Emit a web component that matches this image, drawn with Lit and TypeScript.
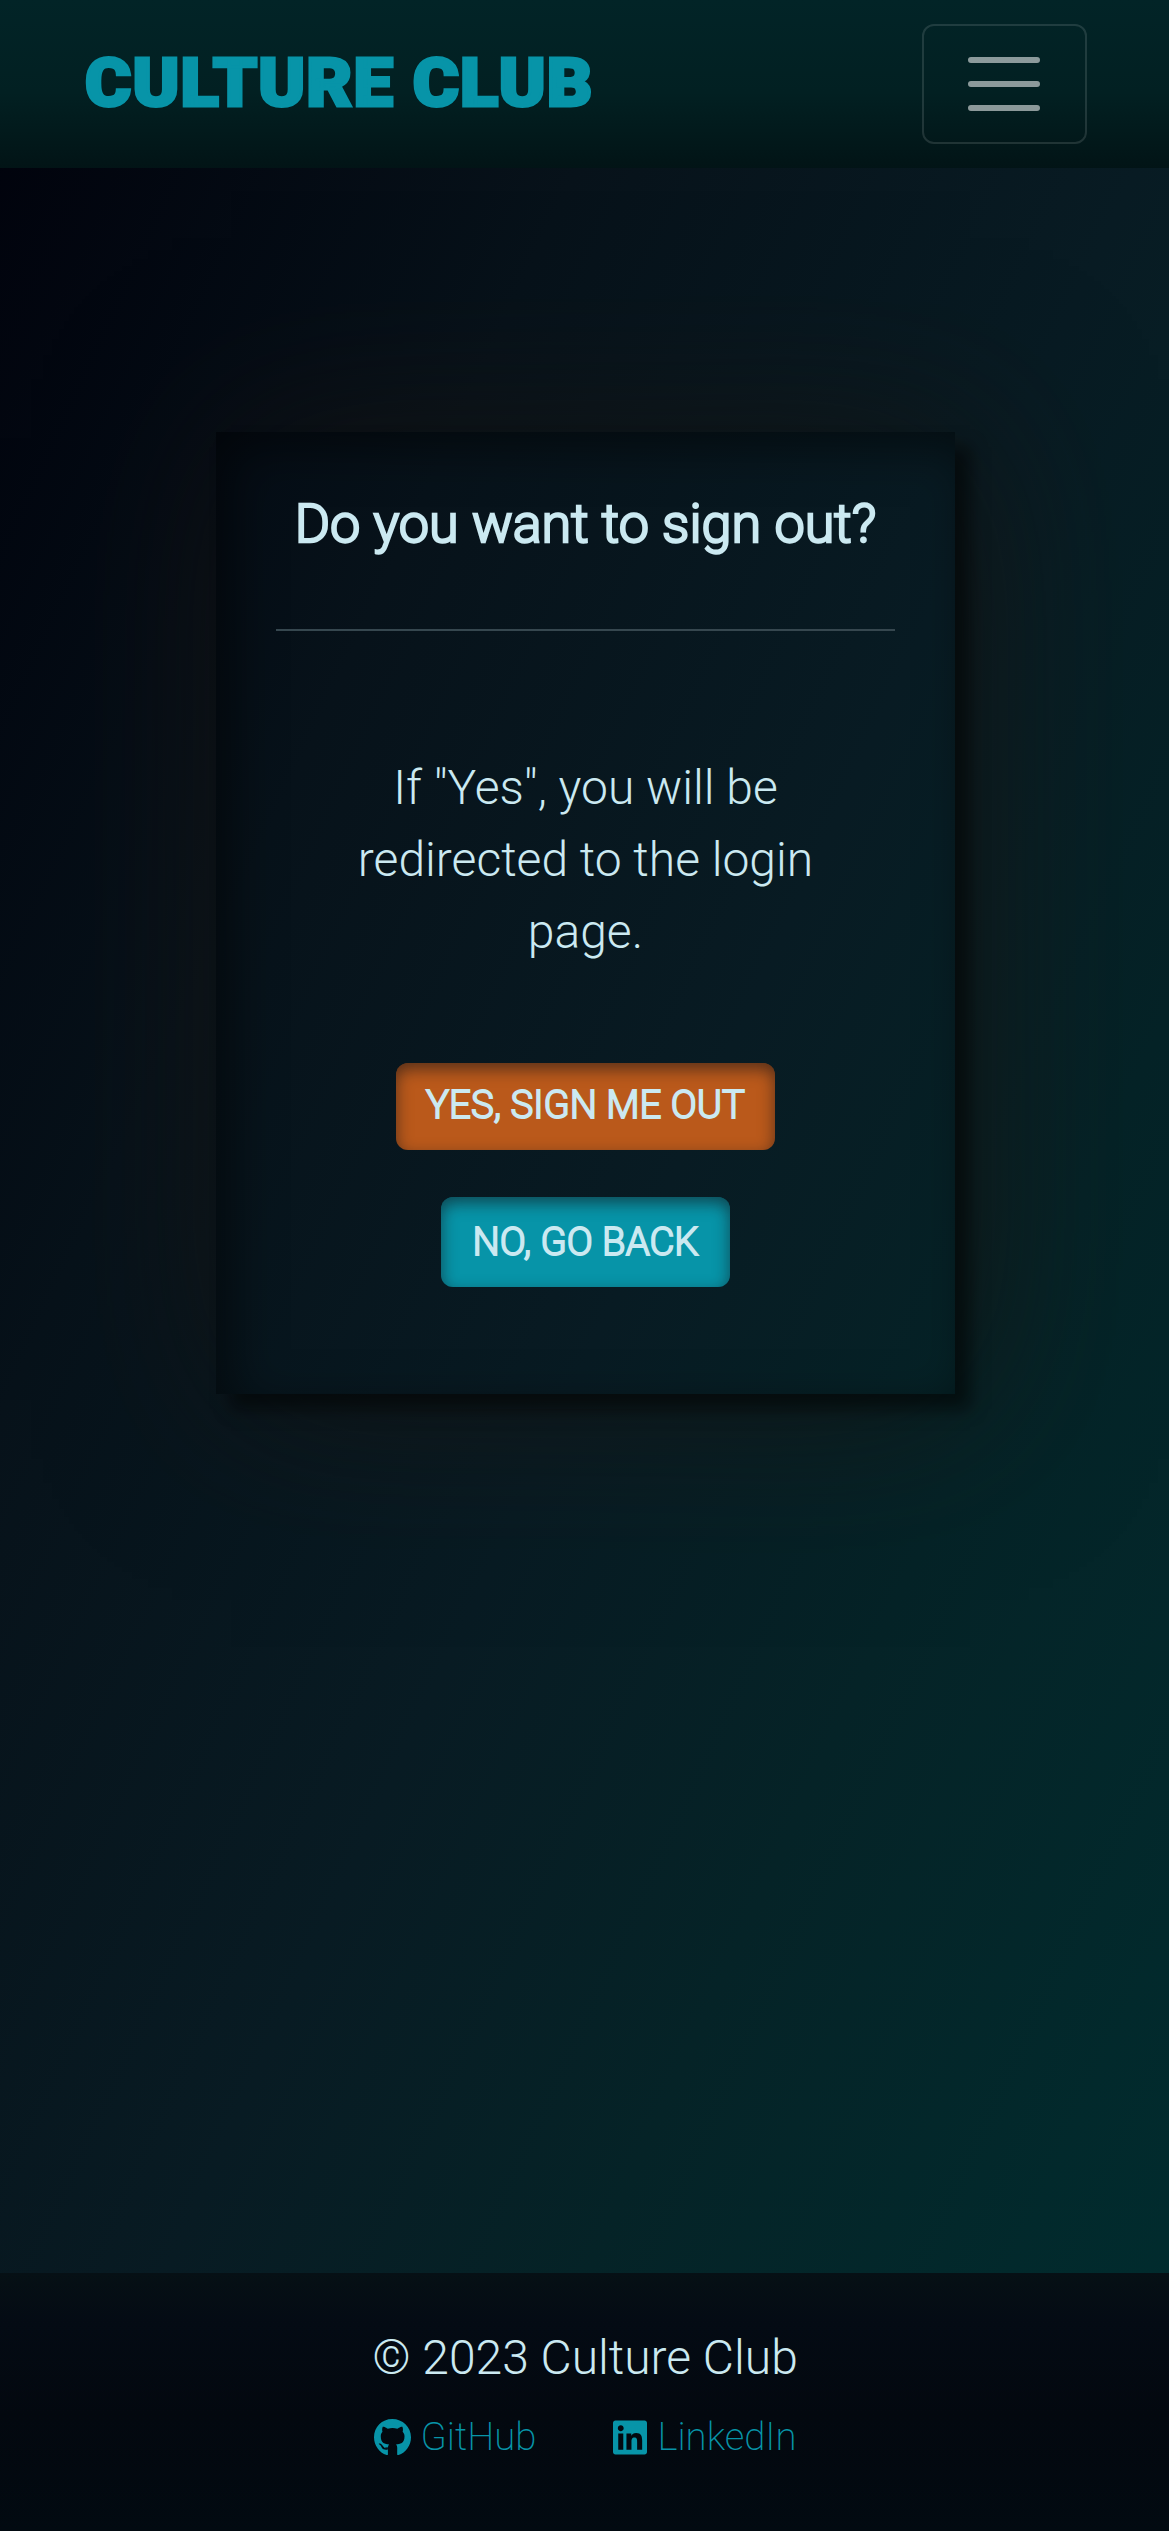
import { LitElement, html, css } from "lit";
import { customElement } from "lit/decorators.js";

@customElement("app-root")
export class AppRoot extends LitElement {
  static styles = css`
    :host {
      display: block;
      font-family: Roboto, "Liberation Sans", sans-serif;
      font-weight: 300;
      font-size: 48px;
      line-height: 72px;
      color: #cbe9f1;
    }
    * { box-sizing: border-box; }
    .page {
      display: flex;
      flex-direction: column;
      height: 2531px;
      background: linear-gradient(to bottom right, #00010b 0%, #07121a 28%, #081b23 52%, #052327 70%, #002d2f 100%);
    }
    .header {
      display: flex;
      align-items: center;
      justify-content: space-between;
      height: 168px;
      padding: 0 82px 0 85px;
      background: linear-gradient(#022427, #022022 55%, #021416);
    }
    .brand {
      font-family: Roboto, sans-serif;
      font-weight: 900;
      font-size: 66px;
      letter-spacing: 1px;
      line-height: 84px;
      padding-bottom: 1px;
      color: #0794a8;
      -webkit-text-stroke: 3px #0794a8;
      text-decoration: none;
      white-space: nowrap;
      transform: scaleX(1.07);
      transform-origin: left center;
    }
    .toggler {
      display: flex;
      align-items: center;
      justify-content: center;
      width: 165px;
      height: 120px;
      padding: 0;
      background: transparent;
      border: 2px solid rgba(255, 255, 255, 0.12);
      border-radius: 12px;
    }
    .toggler svg { width: 90px; height: 90px; margin-right: 2px; }
    .main { flex: 1; padding: 264px 214px 0 216px; }
    .card {
      display: flex;
      flex-direction: column;
      align-items: center;
      height: 962px;
      padding: 48px 60px;
      box-shadow:
        15px 15px 15px rgba(2, 4, 3, 0.55),
        15px 6px 165px rgba(24, 20, 18, 0.75),
        inset 15px 15px 50px rgba(0, 0, 0, 0.5);
    }
    .title {
      margin: 0;
      padding-top: 9px;
      height: 149px;
      font-size: 54px;
      font-weight: 300;
      line-height: 69px;
      white-space: nowrap;
      -webkit-text-stroke: 2.4px #cbe9f1;
    }
    .rule { width: 619px; height: 2px; background: #36474f; flex: none; }
    .message {
      width: 480px;
      margin: 121px 0 95px;
      text-align: center;
    }
    .button {
      display: flex;
      align-items: center;
      justify-content: center;
      border: 0;
      padding: 0;
      border-radius: 12px;
      font: 300 38.4px/60px Roboto, sans-serif;
      color: #cbe9f1;
      -webkit-text-stroke: 1.8px #cbe9f1;
      box-shadow: inset 0 6px 16px rgba(20, 20, 25, 0.6);
    }
    .yes { width: 379px; height: 87px; background: #ba591b; margin-bottom: 47px; padding-bottom: 3px; }
    .no { width: 289px; height: 90px; background: #0794a8; }
    .footer {
      display: flex;
      flex-direction: column;
      align-items: center;
      height: 258px;
      padding-top: 49px;
      background: linear-gradient(#061015, #040b14 20%, #03080f 55%, #020a11);
    }
    .copyright { margin: 0 0 0 1px; }
    .links {
      display: flex;
      width: 423px;
      margin-left: 1px;
      justify-content: space-between;
      font-size: 38.4px;
      font-weight: 200;
      line-height: 58px;
      margin-top: 14px;
    }
    .link {
      display: flex;
      align-items: center;
      gap: 10px;
      color: #0794a8;
      text-decoration: none;
    }
    .github { width: 37px; height: 37px; }
    .linkedin { width: 34px; height: 39px; }
  `;

  render() {
    return html`
      <div class="page">
        <header class="header">
          <a class="brand">CULTURE CLUB</a>
          <button class="toggler" aria-label="Toggle navigation">
            <svg viewBox="0 0 30 30" fill="none" stroke="rgba(255,255,255,.55)" stroke-width="2" stroke-linecap="round">
              <path d="M4 7h22M4 15h22M4 23h22" />
            </svg>
          </button>
        </header>
        <main class="main">
          <section class="card">
            <h1 class="title">Do you want to sign out?</h1>
            <div class="rule"></div>
            <p class="message">If "Yes", you will be redirected to the login page.</p>
            <button class="button yes">YES, SIGN ME OUT</button>
            <button class="button no">NO, GO BACK</button>
          </section>
        </main>
        <footer class="footer">
          <p class="copyright">© 2023 Culture Club</p>
          <nav class="links">
            <a class="link">
              <svg class="github" viewBox="0 8 496 496" fill="currentColor">
                <path d="M165.900 397.400c0 2-2.300 3.600-5.200 3.600-3.300.3-5.600-1.300-5.600-3.600 0-2 2.300-3.600 5.200-3.600 3-.3 5.600 1.300 5.600 3.600zm-31.100-4.500c-.7 2 1.300 4.300 4.300 4.900 2.600 1 5.600 0 6.200-2s-1.300-4.300-4.300-5.200c-2.600-.7-5.500.3-6.200 2.300zm44.200-1.700c-2.900.7-4.900 2.600-4.600 4.900.3 2 2.900 3.300 5.900 2.600 2.900-.7 4.900-2.600 4.600-4.600-.3-1.900-3-3.200-5.900-2.900zM244.800 8C106.100 8 0 113.300 0 252c0 110.900 69.800 205.800 169.500 239.200 12.800 2.300 17.300-5.600 17.300-12.100 0-6.200-.3-40.400-.3-61.400 0 0-70 15-84.700-29.800 0 0-11.400-29.100-27.800-36.600 0 0-22.900-15.700 1.600-15.400 0 0 24.900 2 38.600 25.800 21.900 38.600 58.600 27.500 72.900 20.900 2.300-16 8.800-27.100 16-33.700-55.900-6.200-112.300-14.300-112.300-110.500 0-27.500 7.600-41.300 23.600-58.900-2.600-6.500-11.100-33.300 2.600-67.900 20.900-6.500 69 27 69 27 20-5.600 41.500-8.500 62.800-8.500s42.800 2.900 62.800 8.500c0 0 48.100-33.600 69-27 13.700 34.700 5.200 61.400 2.600 67.900 16 17.700 25.800 31.500 25.800 58.900 0 96.500-58.900 104.200-114.800 110.500 9.200 7.900 17 22.900 17 46.400 0 33.700-.3 75.400-.3 83.600 0 6.500 4.600 14.400 17.300 12.100C428.200 457.800 496 362.900 496 252 496 113.300 383.500 8 244.800 8z" />
              </svg>
              GitHub
            </a>
            <a class="link">
              <svg class="linkedin" viewBox="0 0 448 512" fill="currentColor">
                <path d="M416 32H31.900C14.300 32 0 46.500 0 64.300v383.400C0 465.500 14.300 480 31.900 480H416c17.600 0 32-14.500 32-32.300V64.300c0-17.800-14.400-32.300-32-32.300zM135.400 416H69V202.200h66.500V416zm-33.200-243c-21.300 0-38.500-17.300-38.500-38.500S80.900 96 102.200 96c21.200 0 38.500 17.300 38.500 38.500 0 21.300-17.200 38.500-38.500 38.500zm282.100 243h-66.400V312c0-24.800-.5-56.700-34.500-56.700-34.600 0-39.900 27-39.900 54.900V416h-66.400V202.200h63.700v29.200h.9c8.900-16.800 30.600-34.500 62.900-34.500 67.200 0 79.700 44.300 79.700 101.900V416z" />
              </svg>
              LinkedIn
            </a>
          </nav>
        </footer>
      </div>
    `;
  }
}
